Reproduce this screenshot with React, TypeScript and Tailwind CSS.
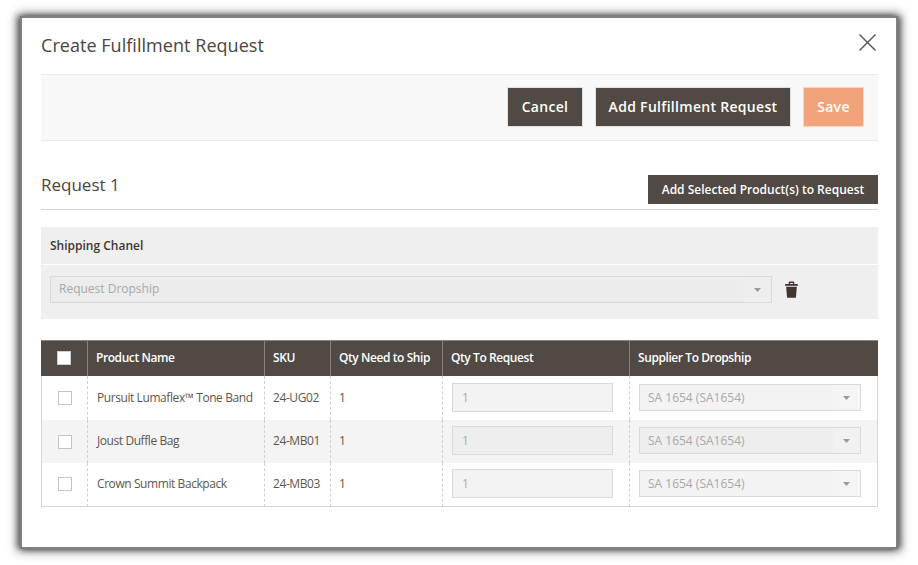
const rows = [
  { name: "Pursuit Lumaflex™ Tone Band", sku: "24-UG02", height: "h-[44px]", band: "", field: "bg-[#f3f3f3]", pad: "pb-[1px]" },
  { name: "Joust Duffle Bag", sku: "24-MB01", height: "h-[43px]", band: "bg-[#f4f4f4]", field: "bg-[#eeeeee]", pad: "pb-[2px]" },
  { name: "Crown Summit Backpack", sku: "24-MB03", height: "h-[44px]", band: "", field: "bg-[#f3f3f3]", pad: "pb-[2px]" },
];

const headers = ["Product Name", "SKU", "Qty Need to Ship", "Qty To Request", "Supplier To Dropship"];

const Arrow = () => (
  <svg width="7" height="4" viewBox="0 0 7 4" aria-hidden="true">
    <path d="M0 0h7L3.500 4z" fill="#9a9a9a" />
  </svg>
);

const Trash = () => (
  <svg width="13" height="17" viewBox="0 0 14 18" aria-hidden="true" fill="#41362f">
    <path d="M5 0.5h4a1 1 0 0 1 1 1V3h3a1 1 0 0 1 1 1v1H0V4a1 1 0 0 1 1-1h3V1.500a1 1 0 0 1 1-1zM5.500 2v1h3V2z" fillRule="evenodd" />
    <path d="M1.200 6h11.600l-1 11a1 1 0 0 1-1 1H3.200a1 1 0 0 1-1-1z" />
  </svg>
);

export default function App() {
  return (
    <div className="h-[565px] w-[918px] overflow-hidden bg-white pl-[20px] pt-[16px] font-['Open_Sans',sans-serif] text-[#41362f]">
      <div className="h-[533px] w-[878px] border-2 border-[#7f7f7f] bg-white pl-[19px] pr-[18px] shadow-[-3px_0_6px_rgba(0,0,0,0.45),3px_0_6px_rgba(0,0,0,0.45),0_0_10px_3px_rgba(0,0,0,0.35)]">
        <div className="flex h-[56px] items-start justify-between">
          <h1 className="mt-[14px] text-[18px] leading-[26px] tracking-[0.04px] text-[#4a4542]">Create Fulfillment Request</h1>
          <svg className="mr-[1px] mt-[15px]" width="19" height="19" viewBox="0 0 19 19" aria-hidden="true">
            <path d="M1.500 1.500l16 16M17.500 1.500l-16 16" stroke="#5c5a58" strokeWidth="1.500" fill="none" />
          </svg>
        </div>

        <div className="flex h-[67px] items-center justify-end gap-[12px] border-y border-[#e9e9e9] bg-[#f8f8f8] pb-[2px] pr-[14px]">
          <button className="h-[40px] w-[76px] border border-[#e3e1df] bg-[#514943] text-[14px] font-semibold tracking-[0.3px] text-white">Cancel</button>
          <button className="h-[40px] w-[196px] border border-[#e3e1df] bg-[#514943] text-[14px] font-semibold tracking-[0.3px] text-white">Add Fulfillment Request</button>
          <button className="h-[40px] w-[61px] border border-[#f9d5c0] bg-[#f1a47c] text-[14px] font-semibold tracking-[0.3px] text-white">Save</button>
        </div>

        <div className="flex h-[69px] items-end justify-between border-b border-[#d6d6d6] pb-[5px]">
          <h2 className="mb-[7px] text-[17px] leading-[24px] text-[#4a4542]">Request 1</h2>
          <button className="h-[29px] w-[230px] bg-[#514943] text-[12px] font-semibold text-white">Add Selected Product(s) to Request</button>
        </div>

        <div className="mt-[17px] flex h-[37px] items-center bg-[#efefef] pl-[9px] text-[12px] font-semibold text-[#41362f]">Shipping Chanel</div>
        <div className="mt-[1px] flex h-[54px] items-start bg-[#efefef] pl-[9px] pt-[11px]">
          <div className="flex h-[27px] w-[722px] items-center justify-between border border-[#d9d9d9] bg-[#ececec] text-[12px] text-[#a8a8a8]">
            <span className="mb-[1px] pl-[8px]">Request Dropship</span>
            <span className="flex h-full w-[28px] items-center justify-center bg-[#eeeeee]"><Arrow /></span>
          </div>
          <span className="ml-[13px] mt-[5px] flex"><Trash /></span>
        </div>

        <table className="mt-[21px] w-full table-fixed border-separate border-spacing-0 text-[12px]">
          <colgroup>
            <col className="w-[46px]" />
            <col className="w-[177px]" />
            <col className="w-[66px]" />
            <col className="w-[112px]" />
            <col className="w-[187px]" />
            <col />
          </colgroup>
          <thead>
            <tr className="h-[36px] bg-[#514943] text-left font-semibold text-white">
              <th className="border-t border-[#8a817b] p-0 pb-[1px]">
                <div className="flex justify-center"><span className="block h-[14px] w-[14px] border border-[#cfcfcf] bg-white" /></div>
              </th>
              {headers.map((h) => (
                <th key={h} className="border-l border-t border-[#8a817b] pb-[2px] pl-[8px] font-semibold tracking-[-0.42px]">{h}</th>
              ))}
            </tr>
          </thead>
          <tbody>
            {rows.map((r, i) => {
              const edge = i === 2 ? "border-b border-b-[#d6d6d6] [border-bottom-style:solid]" : "";
              const cell = `border-l border-l-[#d0d0d0] [border-left-style:dashed] ${r.pad} ${edge}`;
              return (
                <tr key={r.sku} className={`${r.height} ${r.band} text-[#5f5650]`}>
                  <td className={`border-l border-[#d6d6d6] p-0 ${i === 2 ? "pb-[1px]" : ""} ${edge}`}>
                    <div className="flex justify-center"><span className="block h-[14px] w-[14px] border border-[#c4c4c4] bg-white" /></div>
                  </td>
                  <td className={`${cell} pl-[9px] tracking-[-0.42px]`}>{r.name}</td>
                  <td className={`${cell} pl-[8px] tracking-[-0.42px]`}>{r.sku}</td>
                  <td className={`${cell} pl-[8px]`}>1</td>
                  <td className={`${cell} pl-[9px]`}>
                    <div className={`flex h-[29px] w-[161px] items-center border border-[#d9d9d9] ${r.field} pl-[9px] text-[#ababab]`}>1</div>
                  </td>
                  <td className={`${cell} border-r border-r-[#d6d6d6] pl-[9px]`}>
                    <div className={`flex h-[27px] w-[222px] items-center justify-between border border-[#d9d9d9] ${r.field} text-[#a8a8a8]`}>
                      <span className="pl-[8px]">SA 1654 (SA1654)</span>
                      <span className="flex h-full w-[27px] items-center justify-center bg-white/20"><Arrow /></span>
                    </div>
                  </td>
                </tr>
              );
            })}
          </tbody>
        </table>
      </div>
    </div>
  );
}
